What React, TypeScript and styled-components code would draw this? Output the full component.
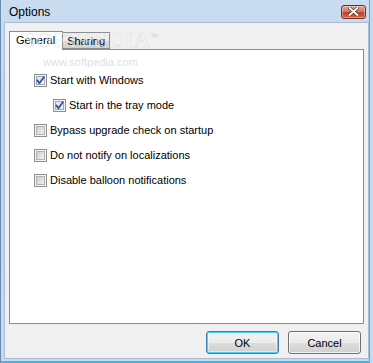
import styled, { createGlobalStyle } from "styled-components";

const GlobalStyle = createGlobalStyle`
  html, body {
    margin: 0;
    padding: 0;
    background: #c4d8ee;
  }
  * {
    box-sizing: border-box;
  }
`;

const options = [
  { label: "Start with Windows", checked: true, indent: false },
  { label: "Start in the tray mode", checked: true, indent: true },
  { label: "Bypass upgrade check on startup", checked: false, indent: false },
  { label: "Do not notify on localizations", checked: false, indent: false },
  { label: "Disable balloon notifications", checked: false, indent: false },
];

const CheckIcon = ({ checked }: { checked: boolean }) => (
  <svg width="13" height="13" viewBox="0 0 13 13">
    <defs>
      <linearGradient id={checked ? "cbOn" : "cbOff"} x1="0" y1="0" x2="1" y2="1">
        <stop offset="0" stopColor={checked ? "#dde3ea" : "#cbcbcb"} />
        <stop offset="1" stopColor={checked ? "#f7f8fa" : "#f4f4f4"} />
      </linearGradient>
    </defs>
    <rect x="0.5" y="0.5" width="12" height="12" fill="#f4f4f4" stroke="#8e8f8f" />
    <rect x="2.5" y="2.5" width="8" height="8" fill={`url(#${checked ? "cbOn" : "cbOff"})`} stroke={checked ? "#9fa9b6" : "#b3b3b3"} />
    {checked && (
      <path
        d="M3.3 6.4 L5.4 9.2 L9.8 3.2"
        fill="none"
        stroke="#2c52a8"
        strokeWidth="1.8"
        strokeLinecap="round"
        strokeLinejoin="round"
      />
    )}
  </svg>
);

const App = () => {
  return (
    <>
      <GlobalStyle />
      <Window>
        <TitleBar>
          <Title>Options</Title>
          <CloseButton>
            <svg width="11" height="9" viewBox="0 0 11 9">
              <path d="M1.5 1 L9.5 8 M9.5 1 L1.5 8" stroke="#5a1a12" strokeWidth="3.2" strokeLinecap="round" />
              <path d="M1.5 1 L9.5 8 M9.5 1 L1.5 8" stroke="#ffffff" strokeWidth="2" strokeLinecap="round" />
            </svg>
          </CloseButton>
        </TitleBar>
        <Client>
          <Watermark>
            <WatermarkLogo>SOFTPEDIA<sup>™</sup></WatermarkLogo>
            <WatermarkUrl>www.softpedia.com</WatermarkUrl>
          </Watermark>
          <Tabs>
            <Tab $active>General</Tab>
            <Tab>Sharing</Tab>
          </Tabs>
          <Panel>
            {options.map((o) => (
              <OptionRow key={o.label} $indent={o.indent}>
                <CheckIcon checked={o.checked} />
                <OptionLabel>{o.label}</OptionLabel>
              </OptionRow>
            ))}
          </Panel>
          <ButtonBar>
            <DialogButton $default>OK</DialogButton>
            <DialogButton>Cancel</DialogButton>
          </ButtonBar>
        </Client>
      </Window>
    </>
  );
};

const Window = styled.div`
  position: relative;
  width: 373px;
  height: 363px;
  display: flex;
  flex-direction: column;
  padding: 0 3px 3px 3px;
  background: linear-gradient(180deg, #c9dcf0 0%, #bed4ec 40%, #c6daef 100%);
  border-left: 1px solid #6d8bad;
  box-shadow: inset -3px 0 0 #c6daef, inset -4px 0 0 #3fb7e8, inset 0 -2px 0 #3fb7e8;
`;

const TitleBar = styled.div`
  height: 22px;
  flex: none;
  display: flex;
  align-items: center;
  justify-content: space-between;
  padding: 0 3px 0 5px;
`;

const Title = styled.span`
  font-family: "Liberation Sans", Arial, sans-serif;
  font-size: 12px;
  color: #000;
  margin-top: 2px;
`;

const CloseButton = styled.div`
  width: 25px;
  height: 14px;
  margin-top: 1px;
  margin-right: 1px;
  display: flex;
  align-items: center;
  justify-content: center;
  border: 1px solid #7a2a20;
  border-radius: 3px;
  background: linear-gradient(180deg, #e5a594 0%, #d47a63 45%, #bf4127 55%, #cb6a4e 100%);
  box-shadow: inset 0 0 0 1px rgba(255, 255, 255, 0.35);
`;

const Client = styled.div`
  position: relative;
  flex: 1;
  width: 365px;
  margin-bottom: 1px;
  background: #f0f0f0;
  border: 1px solid #a9bcd2;
  padding: 7px 5px 0 4px;
  display: flex;
  flex-direction: column;
`;

const Watermark = styled.div`
  position: absolute;
  left: 18px;
  top: 2px;
  pointer-events: none;
  z-index: 3;
`;

const WatermarkLogo = styled.div`
  font-family: "Liberation Serif", serif;
  font-size: 22px;
  line-height: 24px;
  letter-spacing: 1px;
  color: rgba(255, 255, 255, 0.5);
  -webkit-text-stroke: 0.6px rgba(185, 185, 185, 0.35);
  sup {
    font-size: 8px;
  }
`;

const WatermarkUrl = styled.div`
  font-family: "Liberation Sans", sans-serif;
  font-size: 11px;
  line-height: 12px;
  color: rgba(200, 200, 200, 0.6);
  margin: 4px 0 0 20px;
`;

const Tabs = styled.div`
  display: flex;
  align-items: flex-end;
  height: 19px;
  position: relative;
  z-index: 1;
`;

const Tab = styled.div<{ $active?: boolean }>`
  font-family: "Liberation Sans", Arial, sans-serif;
  font-size: 11px;
  color: #000;
  border: 1px solid #898c95;
  border-bottom: ${(p) => (p.$active ? "none" : "1px solid #898c95")};
  height: ${(p) => (p.$active ? "19px" : "17px")};
  padding: ${(p) => (p.$active ? "2px 7px 0 6px" : "2px 4px 0 4px")};
  margin-left: ${(p) => (p.$active ? "0" : "-1px")};
  background: ${(p) =>
    p.$active ? "#ffffff" : "linear-gradient(180deg, #f3f3f3 0%, #ebebeb 50%, #dddddd 51%, #cfcfcf 100%)"};
  position: relative;
  z-index: ${(p) => (p.$active ? 2 : 1)};
  margin-bottom: ${(p) => (p.$active ? "-1px" : "0")};
`;

const Panel = styled.div`
  width: 355px;
  height: 275px;
  background: #ffffff;
  border: 1px solid #898c95;
  padding: 24px 0 0 24px;
  display: flex;
  flex-direction: column;
  gap: 12px;
`;

const OptionRow = styled.label<{ $indent?: boolean }>`
  display: flex;
  align-items: center;
  gap: 3px;
  height: 13px;
  padding-left: ${(p) => (p.$indent ? "19px" : "0")};
`;

const OptionLabel = styled.span`
  font-family: "Liberation Sans", Arial, sans-serif;
  font-size: 11px;
  color: #000;
  line-height: 13px;
`;

const ButtonBar = styled.div`
  display: flex;
  justify-content: flex-end;
  gap: 9px;
  padding: 7px 2px 0 0;
`;

const DialogButton = styled.div<{ $default?: boolean }>`
  width: 73px;
  height: 23px;
  display: flex;
  align-items: center;
  justify-content: center;
  font-family: "Liberation Sans", Arial, sans-serif;
  font-size: 11px;
  color: #000;
  border: 1px solid ${(p) => (p.$default ? "#3c7fb1" : "#707070")};
  border-radius: 3px;
  background: linear-gradient(180deg, #f2f2f2 0%, #ebebeb 50%, #dddddd 51%, #cfcfcf 100%);
  box-shadow: ${(p) =>
    p.$default ? "inset 0 0 0 1px #48d2fb, inset 0 0 0 2px rgba(255,255,255,0.5)" : "inset 0 0 0 1px rgba(255,255,255,0.7)"};
`;

export default App;
